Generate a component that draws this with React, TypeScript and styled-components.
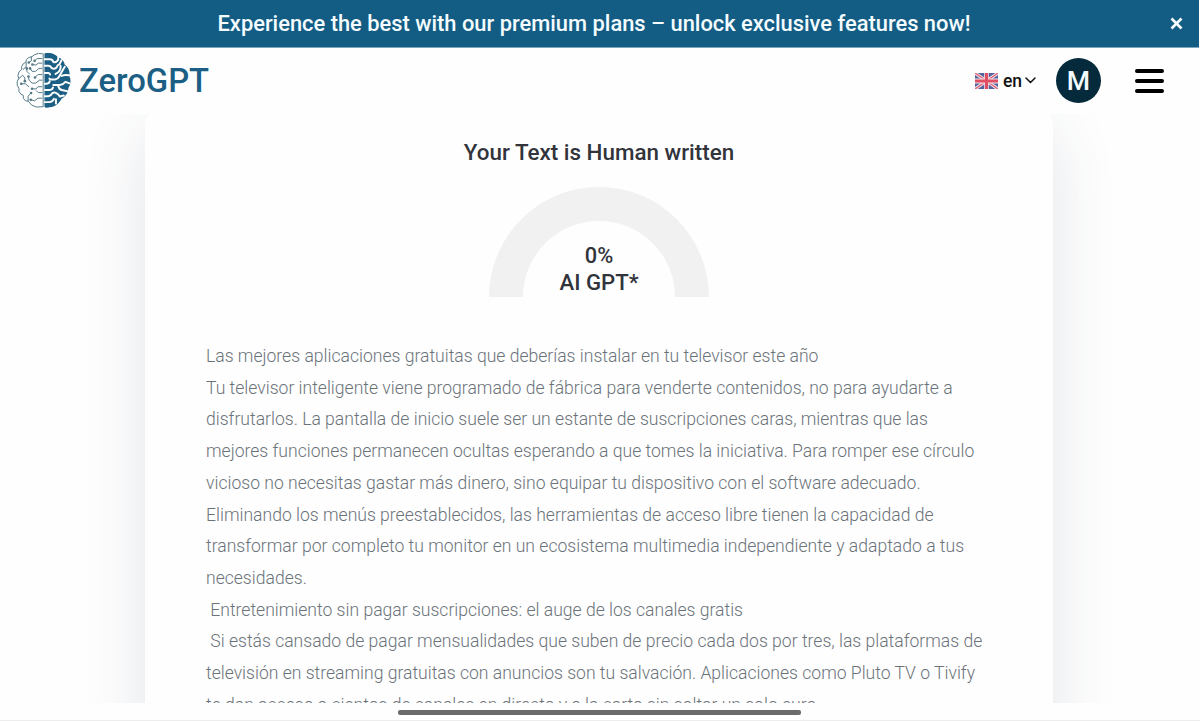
import { Fragment } from 'react';
import styled, { createGlobalStyle } from 'styled-components';

const GlobalStyle = createGlobalStyle`
    * {
        box-sizing: border-box;
    }
    body {
        margin: 0;
        background: #fefefe;
        font-family: Roboto, 'Liberation Sans', sans-serif;
        overflow: hidden;
    }
`;

const Page = styled.div`
    height: 721px;
    display: flex;
    flex-direction: column;
    overflow: hidden;
`;

const Banner = styled.div`
    flex: none;
    display: flex;
    align-items: center;
    width: 1199px;
    height: 48px;
    padding: 0 16px 1px 0;
    background: #135c84;
    border-bottom: 1px solid #7fa6bd;
    color: #f4fcff;
    p {
        flex: 1;
        margin: 0;
        padding-left: 18px;
        text-align: center;
        font-size: 21.88px;
        font-weight: 500;
        white-space: nowrap;
    }
    svg {
        flex: none;
    }
`;

const NavbarComponent = styled.nav`
    flex: none;
    display: flex;
    align-items: center;
    justify-content: space-between;
    height: 66px;
    padding: 0 36px 1px 16px;
    background: #fefefe;
    .navbar__logo {
        display: flex;
        align-items: center;
        column-gap: 8px;
        color: #1b5f84;
        font-size: 32.8px;
        font-weight: 500;
    }
    .navbar__actions {
        display: flex;
        align-items: center;
    }
    .navbar__language {
        display: flex;
        align-items: center;
        margin-right: 20px;
        color: #111;
        font-size: 17.5px;
        font-weight: 500;
        span {
            margin: 0 3px 0 5px;
        }
    }
    .navbar__profile {
        display: flex;
        align-items: center;
        justify-content: center;
        width: 45px;
        height: 45px;
        margin-right: 34px;
        border-radius: 50%;
        background: #042a3b;
        color: #f2fbff;
        font-size: 26.6px;
        font-weight: 500;
    }
`;

const Burger = styled.div`
    display: flex;
    flex-direction: column;
    row-gap: 6px;
    span {
        width: 29px;
        height: 4px;
        border-radius: 2px;
        background: #000;
    }
`;

const Content = styled.main`
    flex: none;
    height: 589px;
    overflow: hidden;
`;

const ResultCard = styled.section`
    display: flex;
    flex-direction: column;
    align-items: center;
    width: 908px;
    height: 760px;
    margin: -5px 0 0 145px;
    padding-top: 29px;
    border-radius: 16px;
    background: #fefefe;
    box-shadow: 0 22px 64px rgba(50, 65, 90, 0.13);
`;

const Title = styled.h2`
    margin: 0;
    color: #32343c;
    font-size: 22.4px;
    font-weight: 500;
    line-height: 28px;
`;

const Gauge = styled.div`
    display: flex;
    flex-direction: column;
    align-items: center;
    justify-content: flex-end;
    width: 220px;
    height: 110px;
    margin-top: 21px;
    padding-bottom: 2px;
    border: 34px solid #f1f1f1;
    border-bottom: none;
    border-radius: 110px 110px 0 0;
    color: #32343c;
    font-size: 22.2px;
    font-weight: 500;
    line-height: 26px;
    white-space: nowrap;
    span:first-child {
        font-size: 21.8px;
    }
`;

const DetectedText = styled.div`
    align-self: flex-start;
    margin: 44px 0 0 61px;
    color: #6b737a;
    font-size: 17.57px;
    font-weight: 300;
    line-height: 31.7px;
    white-space: pre;
`;

const GestureArea = styled.footer`
    flex: none;
    display: flex;
    justify-content: center;
    height: 18px;
    padding: 7px 1px 0 0;
    border-bottom: 1px solid #ededed;
    span {
        width: 403px;
        height: 4.5px;
        border-radius: 2px;
        background: #6a6a6a;
    }
`;

const BrainLogo = () => (
    <svg width="55" height="55" viewBox="0 0 168 168" fill="none">
        <path
            d="M87 1C103-3 119 2 129 13C140 16 147 26 149 36C160 43 166 57 163 70C169 83 167 97 160 107C160 121 150 134 139 140C132 155 118 165 103 166C96 168 88 168 87 164Z"
            fill="#1b5f84"
        />
        <g stroke="#fefefe" strokeWidth="6" strokeLinecap="round" strokeLinejoin="round">
            <path d="M88 19H104Q111 19 114 27Q121 31 129 21V12" />
            <path d="M88 39H99Q106 39 109 46Q116 51 124 44Q126 37 133 34L139 22" />
            <path d="M88 61H97Q103 60 104 66M136 39Q139 55 121 64" />
            <path d="M102 78Q104 82 111 81H119Q129 79 133 70Q138 60 149 42M139 70Q149 65 162 68" />
            <path d="M88 94H94Q102 93 103 86M114 98H134Q144 96 151 88L164 93" />
            <path d="M88 113H103Q112 112 113 105M129 100Q131 112 143 114L157 117" />
            <path d="M88 132H99Q107 131 109 125Q113 119 122 122Q129 124 134 133L146 130" />
            <path d="M88 150H101Q112 149 116 140M122 141V154" />
        </g>
        <g stroke="#557986" strokeWidth="3" strokeLinecap="round" strokeLinejoin="round">
            <path d="M80 2Q68-1 57 5L49 11Q38 12 32 20L30 28Q20 32 17 42L18 49Q6 57 6 69L8 78Q1 87 4 99L9 108Q6 117 15 126L22 129Q20 140 29 146L37 147Q46 162 62 165L83 164V3" />
            <path d="M79 17H64L57 24M79 31H68L61 37L50 35M47 13V24L39 29M31 29V42L22 50M79 47H70L60 56H49L43 47M41 64L33 56V47M79 66H67L58 75M8 79L20 68L27 76V86M79 83H72L60 92H49L40 83L38 72M16 94H29L39 103M79 103H67L61 110L49 109M79 121H68L62 115M37 146V132L46 122M79 138H67L57 146L45 143" />
        </g>
        <g fill="#557986">
            <circle cx="57" cy="24" r="4" />
            <circle cx="50" cy="35" r="4" />
            <circle cx="39" cy="29" r="4" />
            <circle cx="43" cy="47" r="4" />
            <circle cx="33" cy="47" r="4" />
            <circle cx="58" cy="75" r="4" />
            <circle cx="27" cy="86" r="4" />
            <circle cx="38" cy="72" r="4" />
            <circle cx="16" cy="94" r="4" />
            <circle cx="49" cy="109" r="4" />
            <circle cx="46" cy="122" r="4" />
            <circle cx="45" cy="143" r="4" />
        </g>
    </svg>
);

const FlagSVG = () => (
    <svg width="23" height="16" viewBox="0 0 60 40" preserveAspectRatio="none">
        <rect width="60" height="40" fill="#56629d" />
        <path d="M0 0L60 40M60 0L0 40" stroke="#eee5ee" strokeWidth="8" />
        <path d="M0 0L60 40M60 0L0 40" stroke="#df6275" strokeWidth="3.5" />
        <path d="M30 0V40M0 20H60" stroke="#f5e5eb" strokeWidth="12" />
        <path d="M30 0V40M0 20H60" stroke="#df4e62" strokeWidth="8" />
    </svg>
);

const lines = [
    'Las mejores aplicaciones gratuitas que deberías instalar en tu televisor este año',
    'Tu televisor inteligente viene programado de fábrica para venderte contenidos, no para ayudarte a',
    'disfrutarlos. La pantalla de inicio suele ser un estante de suscripciones caras, mientras que las',
    'mejores funciones permanecen ocultas esperando a que tomes la iniciativa. Para romper ese círculo',
    'vicioso no necesitas gastar más dinero, sino equipar tu dispositivo con el software adecuado.',
    'Eliminando los menús preestablecidos, las herramientas de acceso libre tienen la capacidad de',
    'transformar por completo tu monitor en un ecosistema multimedia independiente y adaptado a tus',
    'necesidades.',
    ' Entretenimiento sin pagar suscripciones: el auge de los canales gratis',
    ' Si estás cansado de pagar mensualidades que suben de precio cada dos por tres, las plataformas de',
    'televisión en streaming gratuitas con anuncios son tu salvación. Aplicaciones como Pluto TV o Tivify',
    'te dan acceso a cientos de canales en directo y a la carta sin soltar un solo euro.',
];

const App = () => {
    return (
        <Fragment>
            <GlobalStyle />
            <Page>
                <Banner>
                    <p>Experience the best with our premium plans – unlock exclusive features now!</p>
                    <svg width="13" height="13" viewBox="0 0 13 13" stroke="#f4fcff" strokeWidth="2.7">
                        <path d="M1.5 1.5L11.5 11.5M11.5 1.5L1.5 11.5" />
                    </svg>
                </Banner>
                <NavbarComponent>
                    <div className="navbar__logo">
                        <BrainLogo />
                        <span>ZeroGPT</span>
                    </div>
                    <div className="navbar__actions">
                        <div className="navbar__language">
                            <FlagSVG />
                            <span>en</span>
                            <svg width="11" height="7" viewBox="0 0 11 7" fill="none" stroke="#111" strokeWidth="1.5">
                                <path d="M1 1L5.5 5.5L10 1" strokeLinecap="round" />
                            </svg>
                        </div>
                        <div className="navbar__profile">M</div>
                        <Burger>
                            <span />
                            <span />
                            <span />
                        </Burger>
                    </div>
                </NavbarComponent>
                <Content>
                    <ResultCard>
                        <Title>Your Text is Human written</Title>
                        <Gauge>
                            <span>0%</span>
                            <span>AI GPT*</span>
                        </Gauge>
                        <DetectedText>
                            {lines.map((line) => (
                                <div key={line}>{line}</div>
                            ))}
                        </DetectedText>
                    </ResultCard>
                </Content>
                <GestureArea>
                    <span />
                </GestureArea>
            </Page>
        </Fragment>
    );
};

export default App;
